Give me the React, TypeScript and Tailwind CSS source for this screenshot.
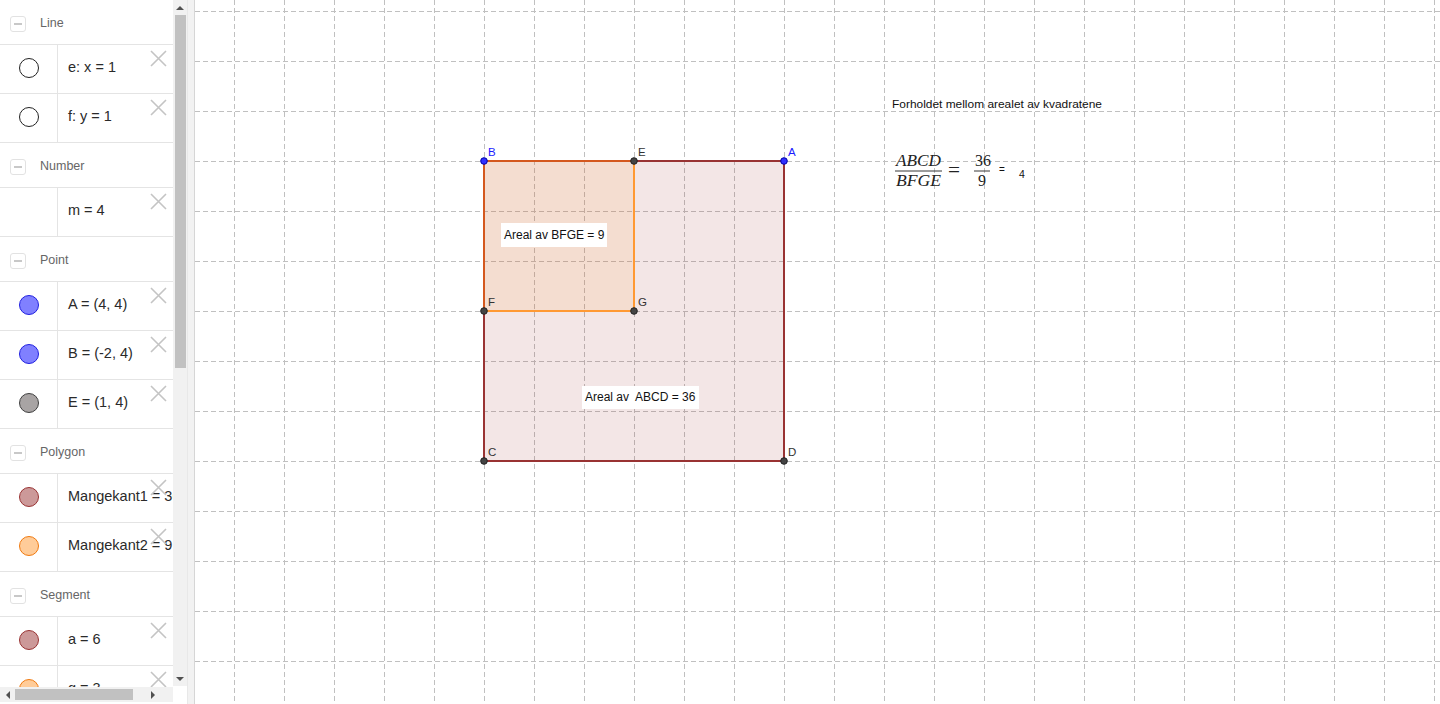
import React from 'react';

type Dot = 'line' | 'none' | 'blue' | 'gray' | 'red' | 'orange';

type Item = { dot: Dot; text: string };
type Group = { title: string; items: Item[] };

const groups: Group[] = [
  { title: 'Line', items: [{ dot: 'line', text: 'e: x = 1' }, { dot: 'line', text: 'f: y = 1' }] },
  { title: 'Number', items: [{ dot: 'none', text: 'm = 4' }] },
  {
    title: 'Point',
    items: [
      { dot: 'blue', text: 'A = (4, 4)' },
      { dot: 'blue', text: 'B = (-2, 4)' },
      { dot: 'gray', text: 'E = (1, 4)' },
    ],
  },
  {
    title: 'Polygon',
    items: [
      { dot: 'red', text: 'Mangekant1 = 36' },
      { dot: 'orange', text: 'Mangekant2 = 9' },
    ],
  },
  { title: 'Segment', items: [{ dot: 'red', text: 'a = 6' }, { dot: 'orange', text: 'g = 3' }] },
];

const dotClass: Record<Dot, string> = {
  line: 'bg-white border-[#222]',
  none: 'border-transparent',
  blue: 'bg-[#8080ff] border-[#2020e0]',
  gray: 'bg-[#a8a4a4] border-[#404040]',
  red: 'bg-[#cc9999] border-[#993333]',
  orange: 'bg-[#ffcc99] border-[#f07a10]',
};

const CloseX = () => (
  <svg className="absolute right-[6px] top-[5px]" width="17" height="17" viewBox="0 0 17 17">
    <path d="M1 1 L16 16 M16 1 L1 16" stroke="#c4c4c4" strokeWidth="1.6" fill="none" />
  </svg>
);

const GroupHeader = ({ title }: { title: string }) => (
  <div className="h-[45px] flex items-center pt-[3px] border-b border-[#e4e4e4] shrink-0">
    <div className="ml-[10px] w-[16px] h-[16px] rounded-[3px] border border-[#e2e2e2] flex items-center justify-center">
      <div className="w-[8px] h-[2px] bg-[#c8c8c8]" />
    </div>
    <span className="ml-[14px] text-[12.5px] text-[#666]">{title}</span>
  </div>
);

const ItemRow = ({ item }: { item: Item }) => (
  <div className="relative h-[49px] flex border-b border-[#e4e4e4] shrink-0">
    <div className="w-[58px] border-r border-[#e4e4e4] flex items-center justify-center pb-[3px]">
      <div className={`w-[20px] h-[20px] rounded-full border ${dotClass[item.dot]}`} />
    </div>
    <div className="flex-1 flex items-center pl-[10px] pb-[2px] text-[14.5px] text-[#2a2a2a] whitespace-nowrap overflow-hidden">
      {item.text}
    </div>
    <CloseX />
  </div>
);

const Sidebar = () => (
  <div className="flex w-[195px] h-full shrink-0 bg-white">
    <div className="w-[173px] flex flex-col">
      <div className="h-[687px] overflow-hidden flex flex-col">
        {groups.map((g) => (
          <React.Fragment key={g.title}>
            <GroupHeader title={g.title} />
            {g.items.map((it) => (
              <ItemRow key={it.text} item={it} />
            ))}
          </React.Fragment>
        ))}
      </div>
      <div className="h-[15px] bg-[#f1f1f1] flex items-center">
        <div className="w-[15px] flex justify-center">
          <div className="w-0 h-0 border-y-[4px] border-y-transparent border-r-[4px] border-r-[#505050]" />
        </div>
        <div className="w-[118px] h-[11px] bg-[#c1c1c1]" />
        <div className="flex-1 flex justify-center">
          <div className="w-0 h-0 border-y-[4px] border-y-transparent border-l-[4px] border-l-[#505050]" />
        </div>
      </div>
    </div>
    <div className="w-[14px] flex flex-col">
      <div className="h-[686px] bg-[#f1f1f1] flex flex-col items-center">
        <div className="h-[15px] flex items-center">
          <div className="w-0 h-0 border-x-[4px] border-x-transparent border-b-[4px] border-b-[#505050]" />
        </div>
        <div className="w-[11px] h-[353px] bg-[#c1c1c1]" />
        <div className="flex-1" />
        <div className="h-[15px] flex items-center">
          <div className="w-0 h-0 border-x-[4px] border-x-transparent border-t-[4px] border-t-[#505050]" />
        </div>
      </div>
    </div>
    <div className="w-[8px] bg-[#f2f2f2] border-l border-[#e8e8e8] border-r border-r-[#d6d6d6]" />
  </div>
);

const xs = Array.from({ length: 25 }, (_, i) => 234 + i * 50);
const ys = Array.from({ length: 14 }, (_, i) => 11 + i * 50);

const Canvas = () => (
  <div className="flex-1 h-full bg-white">
    <svg className="block w-full h-full" viewBox="195 0 1245 704" style={{ fontFamily: '"Liberation Sans", Arial, sans-serif' }}>
      <g stroke="#c0c0c0" strokeWidth="1" strokeDasharray="5 3" shapeRendering="crispEdges">
        {xs.map((x) => (
          <line key={`v${x}`} x1={x + 0.5} y1={0} x2={x + 0.5} y2={704} />
        ))}
        {ys.map((y) => (
          <line key={`h${y}`} x1={195} y1={y + 0.5} x2={1440} y2={y + 0.5} />
        ))}
      </g>

      {/* big square ABCD */}
      <rect x={484} y={161} width={300} height={300} fill="#993333" fillOpacity="0.12" stroke="#993333" strokeWidth="2" />
      {/* small square BFGE */}
      <rect x={484} y={161} width={150} height={150} fill="#ff9933" fillOpacity="0.12" stroke="#ff9933" strokeWidth="2" />
      <path d="M634 161 L484 161 L484 311" stroke="#d4581e" strokeWidth="2" fill="none" />

      <rect x={501} y={223} width={106} height={24} fill="white" />
      <text x={504} y={238.5} fontSize="12" fill="#111">Areal av BFGE = 9</text>

      <rect x={582} y={386} width={117} height={23} fill="white" />
      <text x={585} y={401} fontSize="12" fill="#111" xmlSpace="preserve">Areal av  ABCD = 36</text>

      {/* points */}
      {[
        [484, 161, 'blue'],
        [784, 161, 'blue'],
        [634, 161, 'gray'],
        [484, 311, 'gray'],
        [634, 311, 'gray'],
        [484, 461, 'gray'],
        [784, 461, 'gray'],
      ].map(([x, y, c]) => (
        <circle
          key={`${x}-${y}`}
          cx={x as number}
          cy={y as number}
          r={3.3}
          fill={c === 'blue' ? '#3030ff' : '#444'}
          stroke={c === 'blue' ? '#0000aa' : '#222'}
          strokeWidth="1"
        />
      ))}
      <g fontSize="11.5">
        <text x={488} y={156} fill="#1a1aff">B</text>
        <text x={788} y={156} fill="#1a1aff">A</text>
        <text x={638} y={156} fill="#333">E</text>
        <text x={488} y={306} fill="#333">F</text>
        <text x={638} y={306} fill="#333">G</text>
        <text x={488} y={456} fill="#333">C</text>
        <text x={788} y={456} fill="#333">D</text>
      </g>

      <text x={892} y={108} fontSize="11" fill="#111" textLength="210" lengthAdjust="spacingAndGlyphs">
        Forholdet mellom arealet av kvadratene
      </text>

      {/* formula */}
      <g fontFamily='"Liberation Serif", "Times New Roman", serif' fill="#222">
        <text x={896} y={166} fontSize="16" fontStyle="italic" textLength="45" lengthAdjust="spacingAndGlyphs">ABCD</text>
        <line x1={895} y1={171} x2={942} y2={171} stroke="#222" strokeWidth="0.9" />
        <text x={896} y={186} fontSize="16" fontStyle="italic" textLength="45" lengthAdjust="spacingAndGlyphs">BFGE</text>
        <text x={948} y={177} fontSize="21" textLength="12" lengthAdjust="spacingAndGlyphs">=</text>
        <text x={975} y={166} fontSize="16">36</text>
        <line x1={974} y1={171} x2={990} y2={171} stroke="#222" strokeWidth="0.9" />
        <text x={978} y={186} fontSize="16">9</text>
      </g>
      <text x={999} y={173} fontSize="10" fill="#111">=</text>
      <text x={1019} y={178} fontSize="10.5" fill="#111">4</text>
    </svg>
  </div>
);

export default function App() {
  return (
    <div className="w-[1440px] h-[704px] flex overflow-hidden bg-white" style={{ fontFamily: '"Liberation Sans", Arial, sans-serif' }}>
      <Sidebar />
      <Canvas />
    </div>
  );
}
